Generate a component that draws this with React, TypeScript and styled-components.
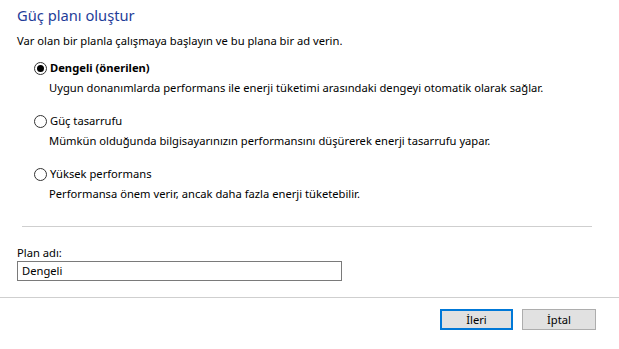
import React from "react";
import styled, { createGlobalStyle } from "styled-components";

const Global = createGlobalStyle`
  html, body { margin: 0; padding: 0; background: #ffffff; }
  body { font-family: "Noto Sans", "Liberation Sans", sans-serif; font-size: 11.2px; color: #000; }
`;

const Page = styled.div`
  width: 619px;
  height: 349px;
  display: flex;
  flex-direction: column;
  background: #fff;
  overflow: hidden;
`;

const Main = styled.div`
  padding: 5px 27px 0 17px;
  display: flex;
  flex-direction: column;
`;

const Title = styled.div`
  font-size: 14.7px;
  line-height: 20px;
  color: #1f3d99;
`;

const Text = styled.div`
  line-height: 20px;
  height: 20px;
  white-space: nowrap;
`;

const Subtitle = styled(Text)`
  margin-top: 6px;
`;

const Options = styled.div`
  display: flex;
  flex-direction: column;
  gap: 13px;
  padding-left: 17px;
  margin-top: 7px;
`;

const Option = styled.div`
  display: flex;
  flex-direction: column;
`;

const OptionHead = styled.label`
  display: flex;
  align-items: center;
  gap: 3px;
  height: 20px;
  line-height: 20px;
`;

const Radio = styled.span<{ $checked?: boolean }>`
  box-sizing: border-box;
  width: 13px;
  height: 13px;
  border-radius: 50%;
  border: 1px solid #333;
  background: #fff;
  display: flex;
  align-items: center;
  justify-content: center;
  flex: none;
  &::after {
    content: "";
    width: 7px;
    height: 7px;
    border-radius: 50%;
    background: ${(p) => (p.$checked ? "#000" : "transparent")};
  }
`;

const OptionLabel = styled.span<{ $bold?: boolean }>`
  font-weight: ${(p) => (p.$bold ? 700 : 400)};
`;

const OptionDesc = styled(Text)`
  padding-left: 15px;
`;

const Separator = styled.div`
  height: 1px;
  background: #cfcfcf;
  margin: 22px 0 0 5px;
`;

const FieldLabel = styled.div`
  margin-top: 18px;
  line-height: 16px;
  height: 16px;
`;

const Input = styled.div`
  box-sizing: border-box;
  width: 325px;
  height: 20px;
  border: 1px solid #7a7a7a;
  padding: 0 4px;
  line-height: 18px;
`;

const Footer = styled.div`
  margin-top: 16px;
  border-top: 1px solid #cfcfcf;
  display: flex;
  justify-content: flex-end;
  gap: 9px;
  padding: 11px 23px 0 0;
`;

const Button = styled.div<{ $primary?: boolean }>`
  box-sizing: border-box;
  width: ${(p) => (p.$primary ? 73 : 74)}px;
  height: 21px;
  background: #e1e1e1;
  border: ${(p) => (p.$primary ? "2px solid #0078d7" : "1px solid #adadad")};
  display: flex;
  align-items: center;
  justify-content: center;
  line-height: 1;
`;

const options = [
  {
    label: "Dengeli (önerilen)",
    desc: "Uygun donanımlarda performans ile enerji tüketimi arasındaki dengeyi otomatik olarak sağlar.",
    checked: true,
  },
  {
    label: "Güç tasarrufu",
    desc: "Mümkün olduğunda bilgisayarınızın performansını düşürerek enerji tasarrufu yapar.",
  },
  {
    label: "Yüksek performans",
    desc: "Performansa önem verir, ancak daha fazla enerji tüketebilir.",
  },
];

export default function App() {
  return (
    <>
      <Global />
      <Page>
        <Main>
          <Title>Güç planı oluştur</Title>
          <Subtitle>Var olan bir planla çalışmaya başlayın ve bu plana bir ad verin.</Subtitle>
          <Options>
            {options.map((o) => (
              <Option key={o.label}>
                <OptionHead>
                  <Radio $checked={o.checked} />
                  <OptionLabel $bold={o.checked}>{o.label}</OptionLabel>
                </OptionHead>
                <OptionDesc>{o.desc}</OptionDesc>
              </Option>
            ))}
          </Options>
          <Separator />
          <FieldLabel>Plan adı:</FieldLabel>
          <Input>Dengeli</Input>
        </Main>
        <Footer>
          <Button $primary>İleri</Button>
          <Button>İptal</Button>
        </Footer>
      </Page>
    </>
  );
}
